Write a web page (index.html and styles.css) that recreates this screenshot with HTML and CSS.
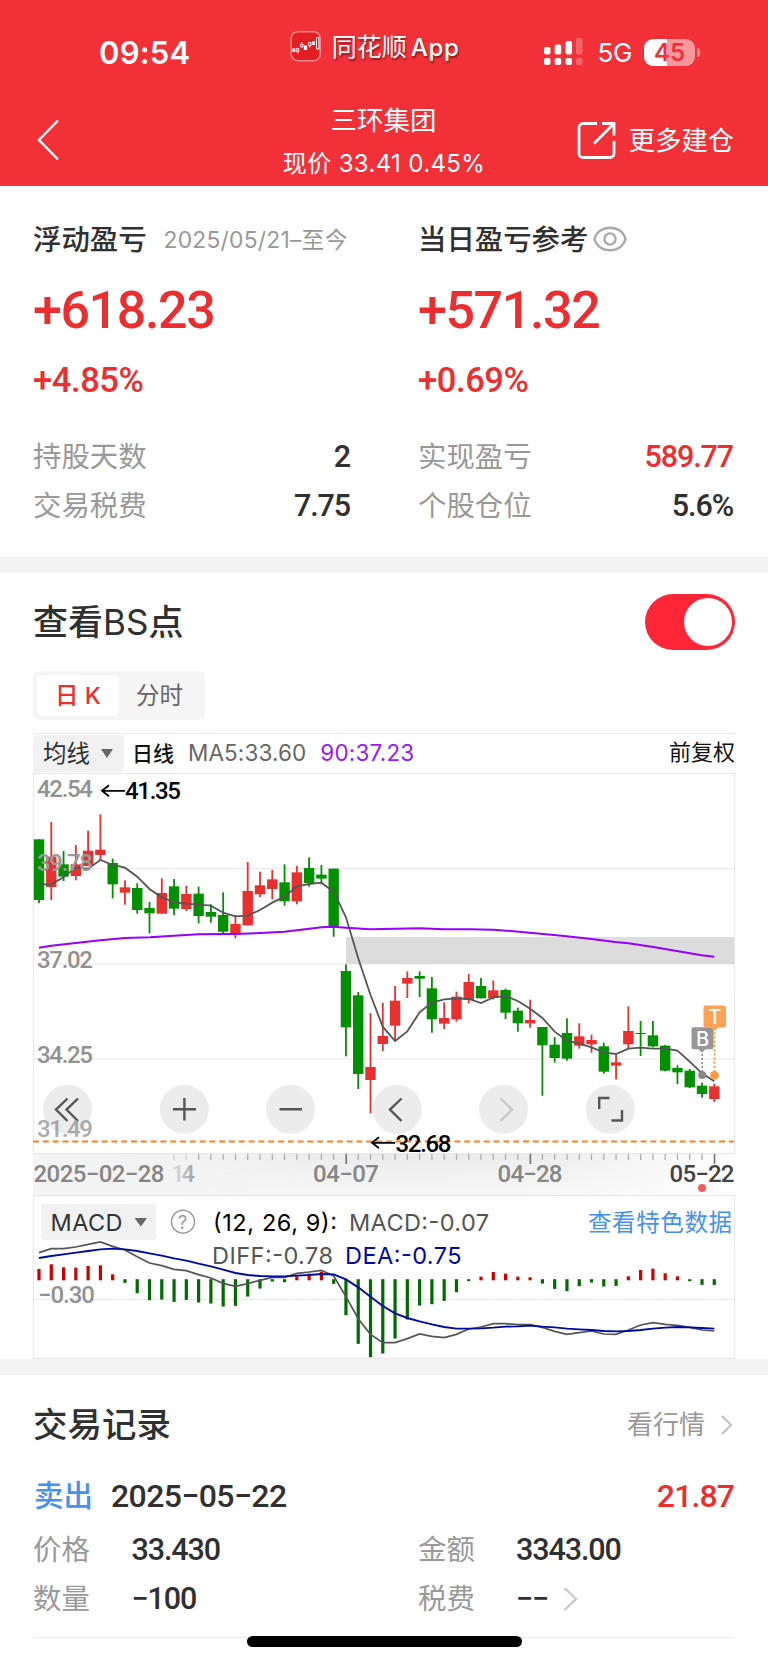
FILE: index.html
```html
<!DOCTYPE html>
<html lang="zh-CN">
<head>
<meta charset="utf-8">
<title>三环集团</title>
<link rel="stylesheet" href="styles.css">
</head>
<body>
<header class="header">
  <div class="status">
    <span class="clock">09:54</span>
    <span class="brand">
      <svg width="32" height="32" viewBox="0 0 32 32"><rect x="1.2" y="1.7" width="29" height="29" rx="6.500" fill="#e21f22" stroke="#f9888b" stroke-width="1.6"/><path d="M3.200 18.500v3.500M4.600 18.500v3.500M14.700 15.500v4.500M16.300 15.500v4.500M23 11v4M24 11v4" stroke="#fff" stroke-width="1.600"/><path d="M6.700 18.500h2v3h-2zM10.700 14h2.300v3h-2.300zM18.700 12.500h2.300v3h-2.300zM26.500 7.500h2.500v11.500h-2.500zM7.700 21.500v2M11.800 12.500v1.500M19.800 15.500v2" stroke="#fff" fill="none"/></svg>
      <span class="brand-name">同花顺<b>App</b></span>
    </span>
    <span class="signals">
      <svg width="39" height="28" viewBox="0 0 39 28" fill="#fff"><rect x="0" y="9" width="6.500" height="7.500" rx="2"/><rect x="10.700" y="6.500" width="6.500" height="10" rx="2"/><rect x="21.500" y="3" width="6.500" height="13.500" rx="2"/><rect x="0" y="20" width="6.500" height="7" rx="2"/><rect x="10.700" y="20" width="6.500" height="7" rx="2"/><rect x="21.500" y="20" width="6.500" height="7" rx="2"/><g opacity=".24"><rect x="32" y="0" width="6.500" height="16.500" rx="2"/><rect x="32" y="20" width="6.500" height="7" rx="2"/></g></svg>
      <span class="net">5G</span>
      <span class="battery">45</span><i class="nub"></i>
    </span>
  </div>
  <nav class="nav">
    <svg class="back" width="24" height="42" viewBox="0 0 24 42"><path d="M21 1.500 2 21l19 19.500" fill="none" stroke="#fff" stroke-width="2.400"/></svg>
    <div class="titles"><div class="stock">三环集团</div><div class="quote">现价 33.41 0.45%</div></div>
    <div class="more">
      <svg width="39" height="39" viewBox="0 0 39 39" fill="none" stroke="#fff" stroke-width="2.800"><path d="M20 2.500H6a4 4 0 0 0-4 4v26a4 4 0 0 0 4 4h27a4 4 0 0 0 4-4V20M25 2.500h12v12M36.500 3 17 22.500"/></svg>
      <span>更多建仓</span>
    </div>
  </nav>
</header>

<section class="summary">
  <div class="col">
    <div class="head"><span class="label-strong">浮动盈亏</span><span class="range">2025/05/21–至今</span></div>
    <div class="big">+618.23</div>
    <div class="pct">+4.85%</div>
    <div class="row"><span>持股天数</span><b>2</b></div>
    <div class="row"><span>交易税费</span><b>7.75</b></div>
  </div>
  <div class="col">
    <div class="head"><span class="label-strong">当日盈亏参考</span><svg class="eye" width="34" height="26" viewBox="0 0 34 26" fill="none" stroke="#aaa" stroke-width="2.400"><path d="M1.500 13C3.500 5.500 10 1.700 17 1.700S30.500 5.500 32.500 13c-2 7.500-8.500 11.300-15.500 11.300S3.500 20.500 1.500 13z"/><circle cx="17" cy="13" r="5.600"/></svg></div>
    <div class="big">+571.32</div>
    <div class="pct">+0.69%</div>
    <div class="row"><span>实现盈亏</span><b class="up">589.77</b></div>
    <div class="row"><span>个股仓位</span><b>5.6%</b></div>
  </div>
</section>

<section class="points">
  <div class="points-head"><h2>查看<span>BS</span>点</h2><span class="toggle"><i></i></span></div>
  <div class="tabs"><span class="tab active">日 K</span><span class="tab">分时</span></div>
  <div class="toolbar">
    <span class="select">均线<i class="caret"></i></span>
    <span class="period">日线</span><span class="ma5">MA5:33.60</span><span class="ma90">90:37.23</span><span class="adjust">前复权</span>
  </div>
  <svg class="chart" id="chart" width="702" height="586" viewBox="33 773 702 586">
    <defs>
      <linearGradient id="axisX"><stop offset="0" stop-color="#f4f4f4"/><stop offset=".25" stop-color="#f4f4f4" stop-opacity=".7"/><stop offset=".5" stop-color="#f4f4f4" stop-opacity="0"/><stop offset=".75" stop-color="#fafafa" stop-opacity=".2"/><stop offset="1" stop-color="#fff"/></linearGradient>
      <linearGradient id="axisY" x2="0" y2="1"><stop offset="0" stop-color="#eaeaea"/><stop offset="1" stop-color="#f7f7f7"/></linearGradient>
      <linearGradient id="fade14" gradientUnits="userSpaceOnUse" x1="168" x2="198" y1="0" y2="0"><stop offset="0" stop-color="#eee"/><stop offset="1" stop-color="#999"/></linearGradient>
    </defs>
    <rect x="33" y="1153" width="701" height="43" fill="url(#axisY)"/>
    <rect x="33" y="1153" width="701" height="43" fill="url(#axisX)"/>
    <g fill="none" stroke="#e8e8e8" stroke-width="1.200">
      <rect x="33.500" y="773.600" width="701" height="380"/>
      <path d="M33 868.500H734M33 964H734M33 1059H734M33 1299.500H734"/>
      <rect x="33.500" y="1195.600" width="701" height="162.800"/>
    </g>
    <rect x="346" y="937" width="388" height="27" fill="#dcdcdc"/>
    <g id="buttons">
      <g fill="#ececec"><circle cx="67.500" cy="1109.300" r="24.500"/><circle cx="184.300" cy="1109.300" r="24.500"/><circle cx="290.500" cy="1109.300" r="24.500"/><circle cx="397.300" cy="1109.300" r="24.500"/><circle cx="503.600" cy="1109.300" r="24.500"/><circle cx="610.300" cy="1109.300" r="24.500"/></g>
      <g fill="none" stroke="#555" stroke-width="2.400"><path d="M67.500 1098.500 56 1109.600 67.500 1121M78 1098.500 66.500 1109.600 78 1121M173 1109.300h23M184.400 1098v22.500M279.500 1109.300h22.500M401.500 1098.500 390 1109.600 401.500 1121M599.200 1109V1098H609.500M622 1110V1120.500H611.500"/><path d="M500.500 1098.500 512 1109.600 500.500 1121" stroke="#c8c8c8"/></g>
    </g>
    <path d="M33 1141.500H734" stroke="#ff7f1a" stroke-width="2" stroke-dasharray="6 3.800"/>
    <g id="candles"></g>
    <g class="lines" fill="none" stroke-width="1.800"><polyline id="ma5" stroke="#555"/><polyline id="ma90" stroke="#9500ff" stroke-width="2"/></g>
    <g id="ticks"></g>
    <g id="bars"></g>
    <g fill="none" stroke-width="1.700"><polyline id="diff" stroke="#555"/><polyline id="dea" stroke="#000aa0" stroke-width="1.900"/></g>
    <g class="scale medium" fill="#919191">
      <text x="37" y="797.300" textLength="56">42.54</text><text x="37" y="871.300" textLength="56" fill="#999">39.78</text>
      <text x="37" y="967.500" textLength="56">37.02</text><text x="37" y="1063" textLength="56">34.25</text>
      <text x="37" y="1137" textLength="56" opacity=".75">31.49</text><text x="38" y="1303" textLength="57">−0.30</text>
    </g>
    <g class="scale strong"><text x="125" y="799.300" textLength="56">41.35</text><text x="395.500" y="1151.500" textLength="56">32.68</text></g>
    <path d="M125 790.800h-22.500m6.500-5.500-7 5.500 7 5.500M395 1142.800h-22.500m6.500-5.500-7 5.500 7 5.500" fill="none" stroke="#000" stroke-width="1.800"/>
    <g class="scale medium" fill="#868686">
      <text x="33.500" y="1182" textLength="131">2025−02−28</text><text x="171" y="1182" textLength="24" fill="url(#fade14)">14</text>
      <text x="313" y="1182" textLength="66">04−07</text><text x="497.500" y="1182" textLength="65">04−28</text><text x="669.500" y="1182" textLength="65" fill="#444">05−22</text>
    </g>
    <circle cx="702" cy="1188" r="4" fill="#f25b5e"/>
    <path d="M702.200 1050v25" stroke="#888" stroke-width="1.600" stroke-dasharray="2 2"/><path d="M714.500 1028v47" stroke="#ff9a45" stroke-width="1.800" stroke-dasharray="2.200 2"/>
    <circle cx="702.200" cy="1075" r="4" fill="#888"/><circle cx="714.500" cy="1075.300" r="4.300" fill="#ff9a45"/>
    <path d="M693 1027.300h18.500q2 0 2 2v18q0 2-2 2h-6l-3.500 3.500-3.500-3.500H693.500q-2 0-2-2v-18q0-2 2-2z" fill="#969696"/>
    <path d="M705.500 1005.500H724q2 0 2 2v18q0 2-2 2h-6l-3.500 3.500-3.500-3.500h-5.500q-2 0-2-2v-18q0-2 2-2z" fill="#ffa257"/>
    <g class="mark"><text x="702.500" y="1046">B</text><text x="714.700" y="1024">T</text></g>
    <rect x="41" y="1204" width="115" height="36" rx="3" fill="#f1f1f1"/>
    <path d="M134.500 1218h12.500l-6.200 8.500z" fill="#666"/>
    <circle cx="183" cy="1221.700" r="11.500" fill="none" stroke="#999" stroke-width="1.500"/>
    <g class="ind">
      <text x="50.500" y="1231" textLength="72" fill="#333">MACD</text><text x="178" y="1228.500" class="q">?</text>
      <text x="213" y="1231" textLength="124" fill="#000">(12, 26, 9):</text><text x="349" y="1231" textLength="140" fill="#555">MACD:-0.07</text>
      <text x="212" y="1263.700" textLength="121" fill="#555">DIFF:-0.78</text><text x="345" y="1263.700" textLength="116.500" fill="#000aa0">DEA:-0.75</text>
      <text x="588" y="1230.500" textLength="144" fill="#4691ee">查看特色数据</text>
    </g>
  </svg>
</section>

<section class="records">
  <div class="records-head"><h2>交易记录</h2><span class="link">看行情<svg width="13" height="22" viewBox="0 0 13 22"><path d="M2 2l9 9-9 9" fill="none" stroke="#c4c4c4" stroke-width="2.200"/></svg></span></div>
  <div class="trade"><span class="side">卖出</span><b class="day">2025−05−22</b><b class="up">21.87</b></div>
  <div class="pairs">
    <span>价格</span><b>33.430</b><span>金额</span><b>3343.00</b>
    <span>数量</span><b>−100</b><span>税费</span><b class="tax">−−<svg width="15" height="26" viewBox="0 0 15 26"><path d="M1.500 2l11.500 11-11.500 11" fill="none" stroke="#c8c8c8" stroke-width="2.200"/></svg></b>
  </div>
  <div class="home"></div>
</section>
<script src="chart.js"></script>
</body>
</html>
```
FILE: styles.css
```css
* { box-sizing: border-box; }
body { margin: 0; width: 768px; height: 1663px; overflow: hidden; background: #fff; color: #303030; font-family: Inter, "Noto Sans CJK SC", sans-serif; line-height: 1; }
h2 { margin: 0; font-weight: 500; }
svg { display: block; flex: none; overflow: visible; }
b { font-weight: 500; }
.header { height: 186px; background: #f23038; color: #fff; display: flex; flex-direction: column; }
.status { height: 104px; padding: 30px 68px 0 99px; display: flex; align-items: flex-start; }
.clock { width: 191px; padding-top: 7px; font-size: 31px; font-weight: 600; letter-spacing: .2px; }
.brand { width: 255px; display: flex; gap: 10px; }
.brand-name { padding-top: 5px; font-size: 25px; text-shadow: 1px 2px 2px rgba(0,0,0,.45); white-space: nowrap; }
.brand-name b { margin-left: 4px; font-size: 24px; letter-spacing: .7px; }
.signals { display: flex; padding-top: 8px; align-items: center; }
.net { margin: 2px 12px 0 14px; font-size: 26px; letter-spacing: -.3px; }
.battery { width: 51px; height: 27px; border-radius: 9px; background: linear-gradient(90deg, #fff 45%, #f8979b 45%); color: #f23038; font-size: 24px; font-weight: 600; text-align: center; line-height: 28px; }
.nub { width: 3px; height: 9px; margin-left: 2px; border-radius: 0 4px 4px 0; background: #f8888c; }
.nav { flex: 1; padding: 0 34px 0 37px; display: grid; grid-template-columns: 1fr auto 1fr; }
.back { margin-top: 15px; }
.titles { text-align: center; padding-top: 3px; white-space: nowrap; }
.stock { font-size: 26.500px; padding-right: 4px; }
.quote { margin: 18px 3px 0 0; font-size: 24px; line-height: 24px; letter-spacing: .35px; }
.more { display: flex; gap: 13px; justify-content: flex-end; align-items: flex-start; padding-top: 17px; font-size: 26.300px; white-space: nowrap; }
.more span { padding-top: 7px; }
.summary { height: 371px; padding: 36px 34px 0 33px; display: grid; grid-template-columns: 318px 316px; column-gap: 67px; }
.head { display: flex; align-items: center; height: 36px; white-space: nowrap; }
.label-strong { font-size: 28.400px; font-weight: 500; }
.range { margin-left: 17px; font-size: 22.800px; color: #999; letter-spacing: .25px; }
.eye { margin-left: 5px; margin-top: -2px; }
.big, .pct, .row b, .day, .trade .up, .pairs b { font-family: Roboto, sans-serif; font-weight: 500; }
.big { margin-top: 27px; height: 52px; font-size: 52px; line-height: 52px; letter-spacing: -1.400px; color: #ec2e30; }
.pct { margin-top: 26px; margin-bottom: 36px; height: 34px; line-height: 35px; font-size: 34.500px; letter-spacing: -.4px; color: #ec2e30; }
.row { height: 48.500px; display: flex; align-items: center; justify-content: space-between; font-size: 28.400px; color: #999; }
.row b { font-size: 30.500px; letter-spacing: -1.100px; margin-right: 1px; color: #303030; }
.row .up, .trade .up { color: #ec2e30; }
.points { height: 818px; border: solid #f4f4f4; border-width: 16px 0; padding: 21px 33px 0; }
.points-head { height: 56px; display: flex; justify-content: space-between; align-items: center; }
.points-head h2 { font-size: 35px; font-weight: 500; }
.points-head h2 span { font-weight: 400; }
.toggle { width: 90px; height: 56px; border-radius: 28px; background: #ff2638; padding: 4px 3px; display: flex; justify-content: flex-end; }
.toggle i { width: 48px; height: 48px; border-radius: 50%; background: #fff; }
.tabs { width: 172px; height: 49px; margin-top: 21px; padding: 4px; border-radius: 7px; background: #f5f5f5; display: flex; }
.tab { width: 81px; line-height: 41px; text-align: center; font-size: 23.500px; color: #666; }
.active { width: 82px; background: #fff; border-radius: 5px; color: #ec2e30; font-weight: 500; }
.toolbar { height: 40px; margin-top: 13px; border-top: 1px solid #ebebeb; display: flex; align-items: center; font-size: 22.500px; white-space: nowrap; }
.select { width: 91px; height: 37px; background: #f1f1f1; border-radius: 3px; display: flex; align-items: center; padding-left: 10px; font-size: 23.500px; }
.caret { margin-left: 11px; border: 6.500px solid transparent; border-top: 9px solid #666; border-bottom: 0; }
.period { margin-left: 8px; font-size: 21px; font-weight: 500; color: #111; }
.ma5 { margin-left: 14px; color: #666; letter-spacing: .1px; }
.ma90 { margin-left: 14px; color: #9c14ff; letter-spacing: .2px; }
.adjust { margin: 0 0 4px auto; font-size: 22px; color: #111; }
.chart text { font-family: Inter, "Noto Sans CJK SC", sans-serif; font-size: 23.500px; }
.chart .scale text { font-family: Roboto, sans-serif; font-size: 24px; }
.chart .medium text, .chart .strong text { font-weight: 500; }
.chart .mark text { fill: #fff; font-size: 20px; font-weight: 500; text-anchor: middle; }
.chart .q { font-size: 18px; fill: #999; }
.records { height: 288px; padding: 29px 34px 0 33px; position: relative; }
.records-head { height: 42px; display: flex; align-items: center; justify-content: space-between; }
.records-head h2 { font-size: 34.500px; }
.link { display: flex; align-items: center; gap: 15px; margin-right: 1px; font-size: 26px; color: #999; }
.trade { height: 50px; margin-top: 25px; display: flex; align-items: center; }
.side { margin-left: 1px; font-size: 29.500px; font-weight: 500; color: #4691ee; }
.day { margin-left: 18px; font-size: 32px; letter-spacing: -.6px; }
.trade .up { margin-left: auto; font-size: 32px; letter-spacing: -.9px; }
.pairs { margin-top: 5px; padding-bottom: 14px; border-bottom: 1px solid #eee; display: grid; grid-template-columns: 98.500px 286.500px 98px 1fr; grid-auto-rows: 48.500px; align-items: center; font-size: 28.400px; color: #999; }
.pairs b { color: #303030; font-size: 30.500px; letter-spacing: -1.100px; }
.tax { display: flex; align-items: center; gap: 15px; }
.home { position: absolute; left: 247px; top: 261px; width: 275px; height: 11px; border-radius: 6px; background: #000; }
```
FILE: chart.js
```js
const X0 = 39, STEP = 12.278;
const RED = '#e93030', GREEN = '#009000';
const at = i => X0 + i * STEP;

// [direction, bodyTop, bodyBottom, wickTop, wickBottom], three units per pixel, grouped by vertical origin
const groups = [
  [760, [['G',238,420,238,429],['R',290,381,186,420],['G',313,350,273,363],['R',313,348,255,361],['R',272,318,212,318],['R',269,285,163,300],['G',309,373,296,415],['R',382,398,361,434],['G',384,450,370,461],['G',444,460,426,520],['R',399,461,355,461],['G',379,446,357,465],['R',402,447,377,453],['G',401,468,380,490],['G',456,470,433,488],['G',465,515,397,520],['R',492,520,465,535]]],
  [840, [['R',153,256,66,256],['R',136,163,95,171],['R',118,147,90,178],['G',127,184,73,197],['R',97,184,78,193],['G',84,129,52,140],['G',104,116,75,133],['G',86,260,86,290],['G',393,562,373,649],['G',466,702,456,747],['R',681,720,519,820],['R',588,612,489,633],['R',482,557,438,600],['R',414,431,394,474],['G',408,416,394,471],['G',445,538,411,578],['R',534,551,487,567],['R',470,538,455,545],['R',426,480,402,490]]],
  [880, [['G',318,355,294,355],['R',331,354,302,359],['G',330,398,326,417],['G',392,430,383,455],['R',420,430,359,443],['G',441,496,441,647],['G',494,534,471,548],['G',459,536,415,542],['R',469,497,430,506],['R',480,493,464,518],['G',499,575,488,581],['R',547,557,524,598],['R',453,493,379,505],['G',459,462,423,528],['G',466,499,423,502],['G',497,572,495,574],['G',564,577,556,612],['G',572,622,567,624],['G',617,642,608,653],['R',619,657,611,666]]]
];
let i = 0, out = '';
for (const [oy, list] of groups) for (const [d, t, b, h, l] of list) {
  const c = d === 'R' ? RED : GREEN, x = at(i++);
  out += `<rect x="${x - .9}" y="${oy + h / 3}" width="1.8" height="${(l - h) / 3}" fill="${c}"/>`;
  out += `<rect x="${x - 5.2}" y="${oy + t / 3}" width="10.4" height="${(b - t) / 3}" fill="${c}"/>`;
}
document.getElementById('candles').innerHTML = out;

const series = parts => {
  let n = 0;
  return parts.flatMap(([oy, v]) => v.map(y => `${at(n++)},${oy + y / 3}`)).join(' ');
};
const put = (id, pts) => document.getElementById(id).setAttribute('points', pts);
put('ma5', series([[760, [373,373,352,322,326,300,315,323,350,387,412,427,431,434,437,458,469,467,450]], [840, [188,170,139,132,128,155,232,355,465,560,603,574,517,488,478,475,477]], [880, [369,352,348,363,386,414,455,482,491,502,517,522,506,503,506,506,512,545,580,604]]]));
put('diff', series([[1190, [188,176,176,171,163,156,169,180,200,219,227,238,242,254,264,280,289,281,271,262,262,250,246,241,258,320,386,433,458]], [1160, [548,536,522,529,533,523,507,501,491,491,494,494,502,514,523,518,513,522,523,510,495,488,493,496,502,510,513]]]));
put('dea', series([[1190, [204,198,193,188,183,178,176,178,183,190,197,205,212,221,229,239,249,255,258,259,259,257,255,252,253,268,292,320,348]], [1160, [460,474,484,493,501,506,506,505,503,500,499,497,500,502,506,508,510,513,514,513,510,506,503,501,502,504,506]]]));
put('ma90', [[20,760,[[57,563],[94,557],[167,549],[241,541],[315,534],[390,532],[462,527],[535,523],[610,522],[640,522]]], [230,840,[[16,282],[90,279],[163,275],[200,271],[275,262],[311,260],[348,263],[421,268],[495,266],[570,265],[641,268],[710,268]]], [470,880,[[0,148],[70,149],[180,158],[290,169],[365,177],[435,186],[475,190],[550,201],[620,213],[695,226],[733,230]]]]
  .flatMap(([ox, oy, p]) => p.map(([x, y]) => `${ox + x / 3},${oy + y / 3}`)).join(' '));

// Histogram: end of each bar relative to the zero line, positive is up
const hist = [34,48,39,38,43,45,18,-11,-42,-63,-61,-68,-62,-70,-73,-82,-80,-52,-28,-7,-9,12,20,26,-14,-108,-194,-234,-223,-178,-121,-79,-75,-65,-39,-6,11,25,20,11,9,-13,-29,-36,-21,-10,-22,-20,12,31,35,21,12,-6,-17,-17];
document.getElementById('bars').innerHTML = hist.map((v, k) => {
  const y = v > 0 ? 1280.3 - v / 3 : 1279.2;
  return `<rect x="${at(k) - 1.6}" y="${y}" width="3.2" height="${Math.abs(v) / 3}" fill="${v > 0 ? '#c00' : '#006b00'}"/>`;
}).join('');

let ticks = '';
for (let k = 11; k < 56; k++) {
  const major = k === 25 || k === 40 || k === 55;
  ticks += `<rect x="${at(k) - .6}" y="1154" width="${major ? 1.7 : 1.2}" height="${major ? 10 : 6}" fill="${major ? '#777' : k < 13 ? '#ccc' : '#aaa'}"/>`;
}
document.getElementById('ticks').innerHTML = ticks;
```
